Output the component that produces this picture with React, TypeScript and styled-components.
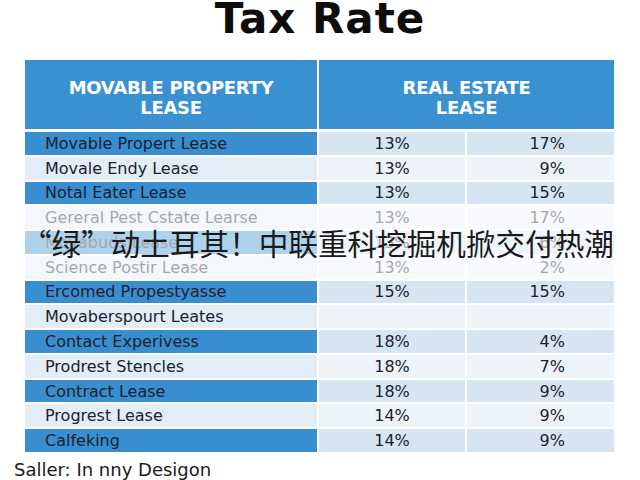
import React from "react";
import styled, { createGlobalStyle } from "styled-components";

const Global = createGlobalStyle`
  html, body { margin: 0; padding: 0; background: #ffffff; }
  body { font-family: "DejaVu Sans", "Noto Sans", sans-serif; }
`;

const Page = styled.div`
  position: relative;
  width: 640px;
  height: 480px;
  overflow: hidden;
  background: #ffffff;
  display: flex;
  flex-direction: column;
`;

const Title = styled.h1`
  margin: 0;
  font-family: "DejaVu Sans", sans-serif;
  font-weight: 700;
  font-size: 42px;
  line-height: 38px;
  height: 38px;
  color: #0d0d0d;
  text-align: center;
  letter-spacing: 1px;
`;

const Table = styled.div`
  margin: 22px 0 0 25px;
  width: 589px;
  display: flex;
  flex-direction: column;
  gap: 3px;
`;

const HeaderRow = styled.div`
  display: grid;
  grid-template-columns: 292px 1fr;
  column-gap: 2px;
  height: 69px;
`;

const HeaderCell = styled.div`
  background: #3a91d2;
  color: #ffffff;
  font-family: "DejaVu Sans", sans-serif;
  font-weight: 700;
  font-size: 18px;
  line-height: 20px;
  text-align: center;
  display: flex;
  align-items: center;
  justify-content: center;
  padding-top: 6px;
  box-sizing: border-box;
  letter-spacing: -0.3px;
`;

const Body = styled.div`
  display: grid;
  grid-template-rows: repeat(13, 1fr);
  row-gap: 2px;
  height: 320px;
`;

const Row = styled.div`
  display: grid;
  grid-template-columns: 292px 146px 1fr;
  column-gap: 2px;
`;

const NameCell = styled.div<{ $dark: boolean }>`
  background: ${(p) => (p.$dark ? "#388ecf" : "#e3edf7")};
  color: #1b2130;
  font-family: "DejaVu Sans", sans-serif;
  font-size: 16px;
  display: flex;
  align-items: center;
  padding-left: 20px;
  white-space: nowrap;
`;

const ValueCell = styled.div<{ $dark: boolean; $right?: boolean }>`
  background: ${(p) => (p.$dark ? "#d7e5f3" : "#edf3f9")};
  color: #1b2130;
  font-family: "DejaVu Sans", sans-serif;
  font-size: 16px;
  display: flex;
  align-items: center;
  justify-content: ${(p) => (p.$right ? "flex-end" : "center")};
  padding-right: ${(p) => (p.$right ? "49px" : "0")};
`;

const Footer = styled.div`
  margin: 8px 0 0 14px;
  font-family: "DejaVu Sans", sans-serif;
  font-size: 18px;
  line-height: 20px;
  color: #1a1a1a;
`;

const Band = styled.div`
  position: absolute;
  left: 0;
  right: 0;
  top: 205px;
  height: 75px;
  background: rgba(255, 255, 255, 0.6);
  display: flex;
  align-items: center;
  padding-left: 22px;
  box-sizing: border-box;
`;

const Caption = styled.div`
  font-family: "Noto Sans CJK SC", "Noto Sans", sans-serif;
  font-size: 29.6px;
  line-height: 34px;
  color: #1a1a1a;
  white-space: nowrap;
  margin-top: 1px;
`;

const rows: [string, string, string][] = [
  ["Movable Propert Lease", "13%", "17%"],
  ["Movale Endy Lease", "13%", "9%"],
  ["Notal Eater Lease", "13%", "15%"],
  ["Gereral Pest Cstate Learse", "13%", "17%"],
  ["Movabuds Lease", "13%", "6%"],
  ["Science Postir Lease", "13%", "2%"],
  ["Ercomed Propestyasse", "15%", "15%"],
  ["Movaberspourt Leates", "", ""],
  ["Contact Experivess", "18%", "4%"],
  ["Prodrest Stencles", "18%", "7%"],
  ["Contract Lease", "18%", "9%"],
  ["Progrest Lease", "14%", "9%"],
  ["Calfeking", "14%", "9%"],
];

export default function App() {
  return (
    <Page>
      <Global />
      <Title>Tax Rate</Title>
      <Table>
        <HeaderRow>
          <HeaderCell>
            MOVABLE PROPERTY
            <br />
            LEASE
          </HeaderCell>
          <HeaderCell>
            REAL ESTATE
            <br />
            LEASE
          </HeaderCell>
        </HeaderRow>
        <Body>
          {rows.map(([name, a, b], i) => {
            const dark = i % 2 === 0;
            return (
              <Row key={i}>
                <NameCell $dark={dark}>{name}</NameCell>
                <ValueCell $dark={dark}>{a}</ValueCell>
                <ValueCell $dark={dark} $right>
                  {b}
                </ValueCell>
              </Row>
            );
          })}
        </Body>
      </Table>
      <Footer>Saller: In nny Desigon</Footer>
      <Band>
        <Caption>“绿”动土耳其！中联重科挖掘机掀交付热潮</Caption>
      </Band>
    </Page>
  );
}
